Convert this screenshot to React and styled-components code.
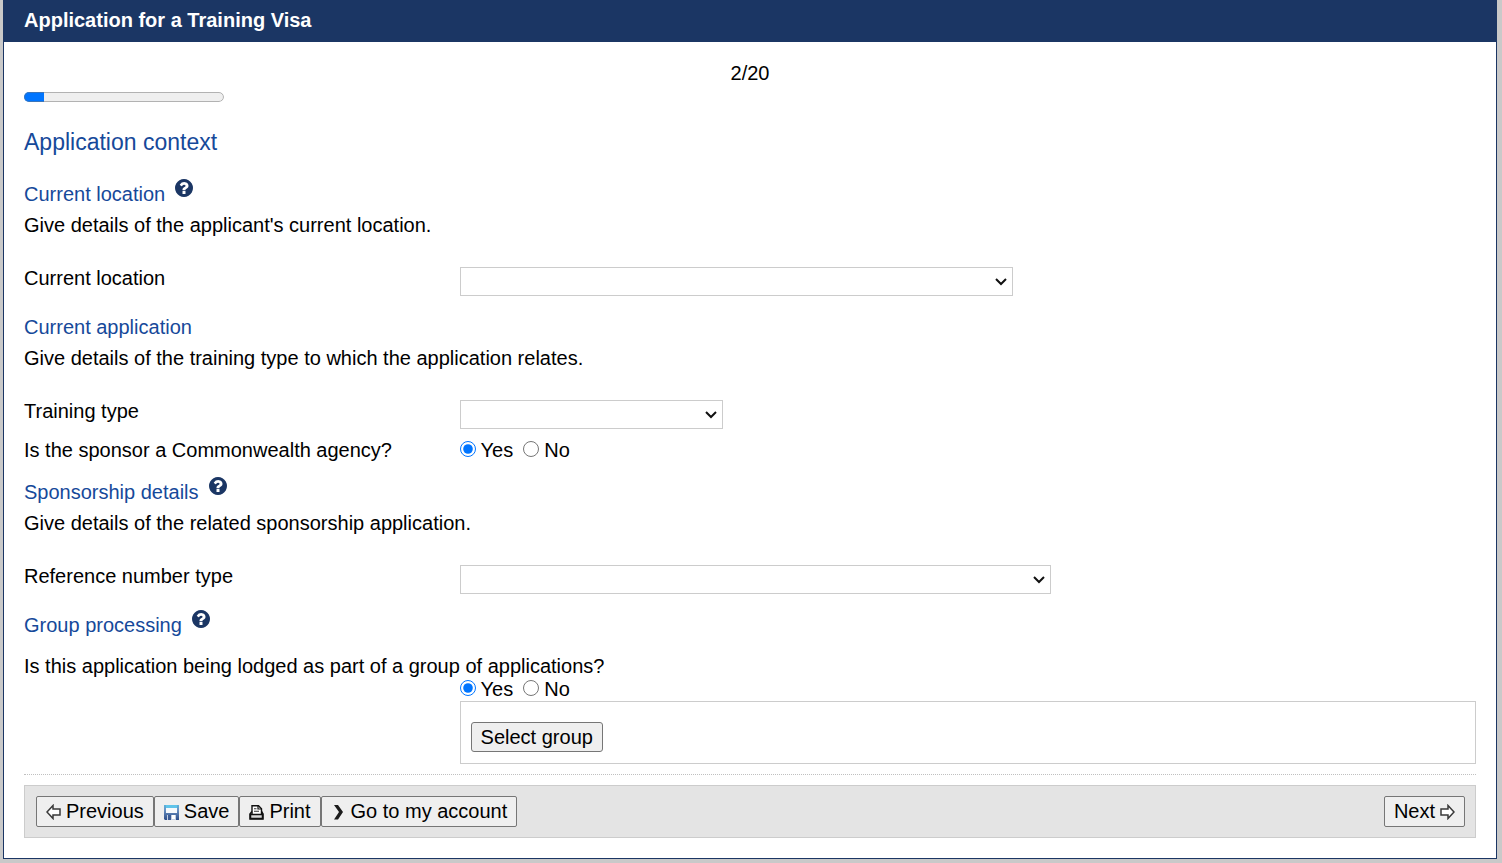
import React from 'react';
import styled, { createGlobalStyle } from 'styled-components';

const NAVY = '#1b3664';
const LINK_BLUE = '#16499a';
const LINE = '#cccccc';

const GlobalStyle = createGlobalStyle`
  * {
    box-sizing: border-box;
  }

  body {
    margin: 0;
    background-color: #c9c9c9;
    color: #000;
    font-family: "Liberation Sans", Arial, sans-serif;
    font-size: 20px;
    line-height: 22px;
  }
`;

const Panel = styled.main`
  margin: 0 5px 4px 3px;
  border: 1px solid ${NAVY};
  border-top: 0;
  background-color: #fff;
`;

const Header = styled.header`
  padding: 9px 20px 11px;
  background-color: ${NAVY};
  color: #fff;

  h1 {
    margin: 0;
    font-size: 20px;
  }
`;

const Content = styled.div`
  padding: 20px;
`;

const PageCount = styled.div`
  text-align: center;
`;

const Progress = styled.progress`
  display: block;
  width: 200px;
  height: 20px;
  margin-top: 3px;
`;

const PageTitle = styled.h2`
  margin: 20px 0 22px;
  color: ${LINK_BLUE};
  font-size: 23px;
  font-weight: normal;
  line-height: 30px;
`;

const Section = styled.section`
  margin-bottom: 16px;
`;

const SectionTitle = styled.h3`
  display: flex;
  gap: 10px;
  margin: 0;
  color: ${LINK_BLUE};
  font-size: 20px;
  font-weight: normal;
  line-height: 31px;
`;

const HelpButton = styled.button`
  display: block;
  width: 18px;
  height: 18px;
  padding: 0;
  border: 0;
  background: none;
  color: ${NAVY};
  cursor: pointer;

  svg {
    display: block;
    width: 18px;
    height: 18px;
  }
`;

const Description = styled.p`
  margin: 0 0 27px;
  line-height: 30px;
`;

const Row = styled.div`
  display: flex;
  margin-bottom: 10px;
`;

const LabelCell = styled.div`
  flex: 0 0 30%;
`;

const FieldCell = styled.div`
  flex: 1;
  min-width: 0;
  margin-left: ${(props) => (props.$indent ? '30%' : '0')};
`;

const SelectWrap = styled.div`
  position: relative;
  width: ${(props) => props.$width};
  max-width: 100%;

  svg {
    position: absolute;
    top: 10px;
    right: 6px;
    pointer-events: none;
  }
`;

const Select = styled.select`
  appearance: none;
  display: block;
  width: 100%;
  height: 29px;
  padding: 0 24px 0 4px;
  border: 1px solid ${LINE};
  border-radius: 0;
  background-color: #fff;
  color: #000;
  font: inherit;
`;

const RadioGroup = styled.div`
  display: flex;
  gap: 10px;

  label {
    display: flex;
    gap: 5px;
  }

  input {
    width: 16px;
    height: 16px;
    margin: 2px 0 0;
  }
`;

const Question = styled.p`
  margin: 14px 0 1px;
`;

const GroupBox = styled.div`
  margin-top: 1px;
  padding: 20px 10px 11px;
  border: 1px solid ${LINE};
`;

const Button = styled.button`
  display: flex;
  align-items: center;
  gap: 5px;
  height: 30px;
  padding: 0 9px;
  border: 1px solid #767676;
  border-radius: 3px;
  background-color: #efefef;
  color: #000;
  font: inherit;
  white-space: nowrap;
`;

const ToolbarButton = styled(Button)`
  height: 31px;
  padding-bottom: 2px;
  border-radius: 2px;

  svg {
    flex: none;
    margin-top: 2px;
  }
`;

const Footer = styled.footer`
  margin-top: 10px;
  padding-top: 10px;
  border-top: 1px dotted #c0c0c0;
`;

const Toolbar = styled.div`
  display: flex;
  justify-content: space-between;
  padding: 10px 10px 10px 11px;
  border: 1px solid ${LINE};
  background-color: #e4e4e4;
`;

const ButtonGroup = styled.div`
  display: flex;
`;

const HelpIcon = () => (
  <svg viewBox="128 128 1536 1536" fill="currentColor" aria-hidden="true">
    <path d="M1024 1376v-192q0-14-9-23t-23-9h-192q-14 0-23 9t-9 23v192q0 14 9 23t23 9h192q14 0 23-9t9-23zm256-672q0-88-55.5-163t-138.5-116-170-41q-243 0-371 213-15 24 8 42l132 100q7 6 19 6 16 0 25-12 53-68 86-92 34-24 86-24 48 0 85.5 26t37.5 59q0 38-20 61t-68 45q-63 28-115.5 86.5t-52.5 125.5v36q0 14 9 23t23 9h192q14 0 23-9t9-23q0-19 21.5-49.5t54.5-49.5q32-18 49-28.5t46-35 44.5-48 28-60.5 12.5-81zm384 192q0 209-103 385.5t-279.5 279.5-385.5 103-385.5-103-279.5-279.5-103-385.5 103-385.5 279.5-279.5 385.5-103 385.5 103 279.5 279.5 103 385.5z" />
  </svg>
);

const SelectArrow = () => (
  <svg width="12" height="9" viewBox="0 0 12 9" aria-hidden="true">
    <path d="M1 2l5 5 5-5" fill="none" stroke="#111" strokeWidth="2" />
  </svg>
);

const ArrowIcon = ({ flip }) => (
  <svg width="15" height="16" viewBox="0 0 15 16" aria-hidden="true">
    <path
      d="M1 8 7 1.5V5H14v6H7v3.5Z"
      transform={flip ? 'matrix(-1 0 0 1 15 0)' : undefined}
      fill="#fff"
      stroke="#3a3a3a"
      strokeWidth="1.5"
    />
  </svg>
);

const SaveIcon = () => (
  <svg width="15" height="16" viewBox="0 0 15 16" aria-hidden="true">
    <defs>
      <linearGradient id="disk" x1="0" y1="0" x2="0" y2="1">
        <stop offset="0" stopColor="#58b4dc" />
        <stop offset="0.3" stopColor="#6b93c4" />
        <stop offset="1" stopColor="#2c4c88" />
      </linearGradient>
    </defs>
    <path d="M0 1h15v15H1l-1-1Z" fill="url(#disk)" />
    <path d="M2 1h11v3H2Z" fill="#5fc4ea" />
    <path d="M2 4h11v5H2Z" fill="#f6f9fc" />
    <path d="M3 11h9v5H3Z" fill="#c3cfe2" />
    <path d="M8 11h3v4H8Z" fill="#fff" />
    <path d="M4 11h3v5H4Z" fill="#3c5c96" />
  </svg>
);

const PrintIcon = () => (
  <svg width="15" height="16" viewBox="0 0 15 16" aria-hidden="true">
    <path d="M3 10V1.7h6.5l3 3V10" fill="#fff" stroke="#111" strokeWidth="1.4" />
    <path d="M9 2v3h3.5" fill="none" stroke="#111" strokeWidth="1.2" />
    <path d="M5 4.8h2.5M5 7.3h5" stroke="#333" strokeWidth="1.1" />
    <path d="M3 7.5 1 10v5h13v-5l-1.5-2.5" fill="none" stroke="#111" strokeWidth="1.5" />
    <path d="M1.5 10.5h12V14.5h-12Z" fill="#d8d8d8" stroke="#111" strokeWidth="1.5" />
  </svg>
);

const ChevronIcon = () => (
  <svg width="15" height="16" viewBox="0 0 15 16" aria-hidden="true">
    <path d="M3 1h4l5 7-5 7.5H3L8 8Z" fill="#1c1c1c" />
  </svg>
);

const Help = ({ topic }) => (
  <HelpButton type="button" aria-label={`Help: ${topic}`}>
    <HelpIcon />
  </HelpButton>
);

const SelectRow = ({ id, label, width }) => (
  <Row>
    <LabelCell>
      <label htmlFor={id}>{label}</label>
    </LabelCell>
    <FieldCell>
      <SelectWrap $width={width}>
        <Select id={id} defaultValue="">
          <option value="" />
        </Select>
        <SelectArrow />
      </SelectWrap>
    </FieldCell>
  </Row>
);

const YesNo = ({ name, labelledBy }) => (
  <RadioGroup role="radiogroup" aria-labelledby={labelledBy}>
    <label>
      <input type="radio" name={name} value="yes" defaultChecked />
      Yes
    </label>
    <label>
      <input type="radio" name={name} value="no" />
      No
    </label>
  </RadioGroup>
);

const App = () => {
  return (
    <>
      <GlobalStyle />
      <Panel>
        <Header>
          <h1>Application for a Training Visa</h1>
        </Header>
        <Content>
          <PageCount>2/20</PageCount>
          <Progress value="2" max="20" aria-label="Application progress" />
          <PageTitle>Application context</PageTitle>

          <Section>
            <SectionTitle>
              Current location
              <Help topic="Current location" />
            </SectionTitle>
            <Description>Give details of the applicant's current location.</Description>
            <SelectRow id="location" label="Current location" width="553px" />
          </Section>

          <Section>
            <SectionTitle>Current application</SectionTitle>
            <Description>
              Give details of the training type to which the application relates.
            </Description>
            <SelectRow id="training-type" label="Training type" width="263px" />
            <Row>
              <LabelCell id="agency-label">Is the sponsor a Commonwealth agency?</LabelCell>
              <FieldCell>
                <YesNo name="agency" labelledBy="agency-label" />
              </FieldCell>
            </Row>
          </Section>

          <Section>
            <SectionTitle>
              Sponsorship details
              <Help topic="Sponsorship details" />
            </SectionTitle>
            <Description>Give details of the related sponsorship application.</Description>
            <SelectRow id="reference-type" label="Reference number type" width="591px" />
          </Section>

          <SectionTitle>
            Group processing
            <Help topic="Group processing" />
          </SectionTitle>
          <Question id="group-label">
            Is this application being lodged as part of a group of applications?
          </Question>
          <FieldCell $indent>
            <YesNo name="group" labelledBy="group-label" />
            <GroupBox>
              <Button type="button">Select group</Button>
            </GroupBox>
          </FieldCell>

          <Footer>
            <Toolbar>
              <ButtonGroup>
                <ToolbarButton type="button">
                  <ArrowIcon />
                  Previous
                </ToolbarButton>
                <ToolbarButton type="button">
                  <SaveIcon />
                  Save
                </ToolbarButton>
                <ToolbarButton type="button">
                  <PrintIcon />
                  Print
                </ToolbarButton>
                <ToolbarButton type="button">
                  <ChevronIcon />
                  Go to my account
                </ToolbarButton>
              </ButtonGroup>
              <ToolbarButton type="button">
                Next
                <ArrowIcon flip />
              </ToolbarButton>
            </Toolbar>
          </Footer>
        </Content>
      </Panel>
    </>
  );
};

export default App;
